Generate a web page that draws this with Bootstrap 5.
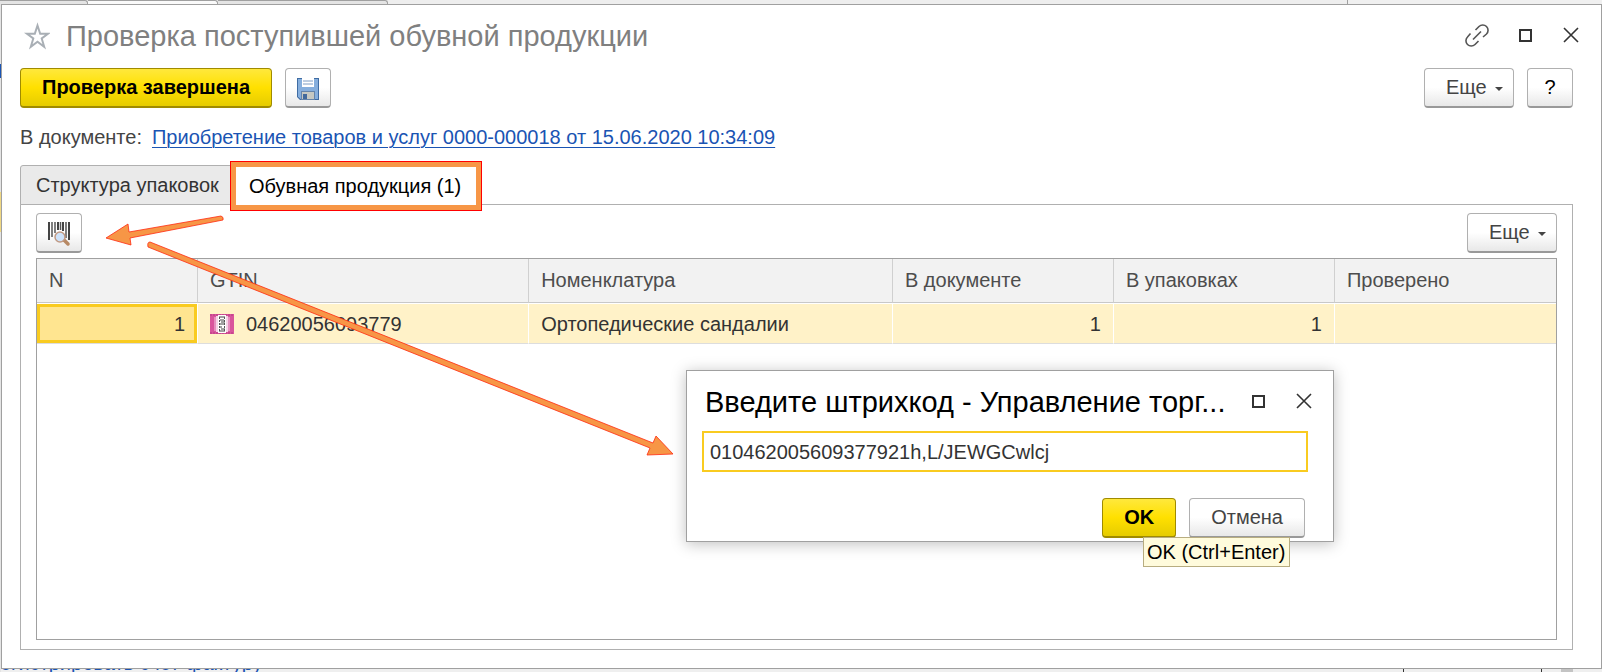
<!DOCTYPE html>
<html lang="ru">
<head>
<meta charset="utf-8">
<meta name="viewport" content="width=device-width, initial-scale=1">
<title>Проверка поступившей обувной продукции</title>
<link rel="stylesheet" href="https://cdn.jsdelivr.net/npm/bootstrap@5.3.0/dist/css/bootstrap.min.css">
<style>
  body { font-family: "Liberation Sans", Arial, sans-serif; font-size: 20px; line-height: 24px; color: #333; background: #efefef; }
  a { color: #1a54b3; }
  .backdrop { background: linear-gradient(#e4e4e4 64px, #1a54b3 64px 78px, #e4e4e4 78px 192px, #f0d883 192px 232px, #e4e4e4 232px) 0 0 / 1px 100% no-repeat; }
  .backdrop-tabs { height: 4px; background: #f0f0f0; }
  .backdrop-tabs span { border-top: 1px solid #a0a0a0; border-right: 1px solid #a0a0a0; border-top-right-radius: 3px; background: #e4e4e4; height: 4px; }
  .backdrop-tabs .tab-a { width: 88px; }
  .backdrop-tabs .tab-b { width: 130px; background: #fafafa; }
  .backdrop-tabs .tab-c { width: 170px; }
  .backdrop-tabs .tab-d { width: 960px; border-top: 0; border-radius: 0; background: #eee; }
  .backdrop-foot { height: 3px; color: #1a54b3; }
  .backdrop-foot .foot-link { line-height: 24px; margin-top: -18px; }
  .backdrop-foot .foot-bar { width: 139px; border-left: 1px solid #333; border-right: 1px solid #333; }
  .backdrop-foot .foot-thumb { width: 12px; background: #c4c4c4; margin: 0 29px 0 19px; }
  .app-window { background: #fff; border: 1px solid #a0a0a0; margin-left: 1px; padding: 11px 28px 18px 18px; min-height: 0; }
  .title-bar { height: 40px; margin-bottom: 12px; }
  .title-bar h1, .prompt h2 { font-size: 29px; line-height: 36px; font-weight: 400; margin: 0; }
  .title-bar h1 { color: #808080; }
  .icon-btn { border: 0; background: none; padding: 0; color: #333; line-height: 0; }
  .win-icons { gap: 24px; margin-right: -9px; }
  .btn-flat { height: 40px; padding: 0 21px; border: 1px solid #b0b0b0; border-bottom: 2px solid #999; border-radius: 4px; background: linear-gradient(#fff 50%, #e8e8e8); font-size: 20px; line-height: 37px; color: #444; }
  .btn-square { width: 46px; padding: 0; }
  .btn-more { width: 90px; padding: 0 10px 0 21px; }
  .btn-more::after { content: ""; border-top: 4px solid #444; border-left: 4px solid transparent; border-right: 4px solid transparent; margin: 2px 0 0; }
  .btn-gold { border-color: #a08b00; background: linear-gradient(#ffe83c, #ffe000 50%, #e6cc00); color: #000; font-weight: 700; }
  .command-bar { gap: 13px; }
  .doc-line { margin: 17px 0 16px; gap: 10px; color: #444; }
  .doc-line a { text-decoration-thickness: 1px; text-underline-offset: 3px; }
  .page-tabs { border: 0; margin-bottom: -1px; position: relative; z-index: 1; }
  .page-tabs .nav-link { height: 40px; border: 1px solid #b0b0b0; border-radius: 3px 0 0 0; margin: 0; padding: 0 15px; background: #eaeaea; color: #333; line-height: 38px; }
  .page-tabs .nav-link:first-child { width: 212px; white-space: nowrap; text-align: left; }
  .page-tabs .nav-link.active { height: 38px; margin: 2px 0 0 4px; background: #fff; border: 0; width: 240px; padding: 0 0 0 13px; line-height: 36px; text-align: left; outline: 5px solid #f79646; box-shadow: 0 0 0 6px red; border-radius: 0; }
  .tab-panel { border: 1px solid #b0b0b0; padding: 8px 15px; }
  .grid-frame { border: 1px solid #a0a0a0; margin-top: 5px; margin-bottom: 1px; }
  .goods { table-layout: fixed; width: 100%; border-collapse: separate; border-spacing: 0; }
  .goods th { height: 44px; font-weight: 400; color: #4d4d4d; background: #f2f2f2; padding: 0 12px 2px; border-right: 1px solid #d0d0d0; border-bottom: 1px solid #c8c8c8; }
  .goods td { height: 41px; padding: 0 12px; background: #fff2c8; border-right: 1px solid #fff; border-top: 1px solid #fff; border-bottom: 1px solid #ddd; background-clip: padding-box; }
  .goods th:last-child, .goods td:last-child { border-right: 0; }
  .goods .picked { background: #ffe590; box-shadow: inset 0 0 0 3px #f9cb20; }
  .arrows { position: absolute; left: 0; top: 0; z-index: 2; pointer-events: none; }
  .prompt { position: absolute; left: 686px; top: 370px; width: 648px; height: 172px; z-index: 3; background: #fff; border: 1px solid #a0a0a0; box-shadow: 0 2px 14px rgba(0,0,0,.25); padding: 13px 25px 0 15px; }
  .prompt h2 { color: #000; padding-left: 3px; white-space: nowrap; }
  .prompt .win-icons { margin-right: -7px; }
  .prompt .form-control { height: 41px; border: 2px solid #f9cb20; border-radius: 0; padding: 1px 6px 0; font-size: 20px; color: #333; margin-top: 11px; }
  .prompt-buttons { margin: 26px 3px 0 0; gap: 13px; }
  .key-tip { position: absolute; left: 456px; top: 166px; border: 1px solid #b8ad80; background: #fffbdc; color: #000; line-height: 28px; padding: 0 4px 0 3px; white-space: nowrap; }
</style>
</head>
<body>
<div class="backdrop vh-100 d-flex flex-column overflow-hidden position-relative">
  <div class="backdrop-tabs d-flex flex-shrink-0"><span class="tab-a"></span><span class="tab-b"></span><span class="tab-c"></span><span class="tab-d"></span></div>

  <main class="app-window flex-grow-1 d-flex flex-column">
    <header class="title-bar d-flex align-items-center">
      <button class="icon-btn me-3" aria-label="В избранное"><svg width="30" height="30" viewBox="0 0 30 30" fill="none" stroke="#a9afb5" stroke-width="2"><path d="M17.500 4.500l2.700 8.300h7.800l-6.300 4.700 2.500 8.300-6.700-5-6.700 5 2.500-8.300-6.300-4.700h7.800z"/></svg></button>
      <h1 class="flex-grow-1">Проверка поступившей обувной продукции</h1>
      <div class="win-icons d-flex align-items-center">
        <button class="icon-btn" aria-label="Ссылка"><svg width="26" height="26" viewBox="0 0 26 26" fill="none" stroke="#555" stroke-width="1.600"><path d="M9 16.500l8-8M11.500 7l3.500-3.500a5.300 5.300 0 0 1 7.500 7.500L19 14M6.500 10.500L3.500 14a5.300 5.300 0 0 0 7.500 7.500l3.500-3.500"/></svg></button>
        <button class="icon-btn" aria-label="Развернуть"><svg width="22" height="22" viewBox="0 0 22 22" fill="none" stroke="#333" stroke-width="2"><path d="M6 5h11v11H6z"/></svg></button>
        <button class="icon-btn" aria-label="Закрыть"><svg width="22" height="22" viewBox="0 0 22 22" stroke="#333" stroke-width="1.600"><path d="M4 3l14 14M18 3L4 17"/></svg></button>
      </div>
    </header>

    <div class="command-bar d-flex align-items-start">
      <button class="btn btn-flat btn-gold">Проверка завершена</button>
      <button class="btn btn-flat btn-square" aria-label="Записать"><svg width="22" height="22" viewBox="0 0 22 22"><path d="M0 0h22v22H3l-3-3z" fill="#3f6ca3"/><path d="M1 1h20v20H3.500L1 18.500z" fill="#85aedd"/><path d="M5 0h12v9H5z" fill="#fff"/><path d="M6 3h10M6 6h10" stroke="#7c9cc4"/><path d="M4 13h14v9H4z" fill="#6484aa"/><path d="M5 14h12v7H5z" fill="#c5c8c2"/><path d="M6 16h4v5H6z" fill="#41699c"/></svg></button>
      <button class="btn btn-flat btn-more dropdown-toggle d-flex align-items-center justify-content-between ms-auto">Еще</button>
      <button class="btn btn-flat btn-square text-black">?</button>
    </div>

    <div class="doc-line d-flex"><span>В документе:</span><a href="#">Приобретение товаров и услуг 0000-000018 от 15.06.2020 10:34:09</a></div>

    <div class="nav nav-tabs page-tabs" role="tablist">
      <button class="nav-link" role="tab">Структура упаковок</button>
      <button class="nav-link active" role="tab">Обувная продукция (1)</button>
    </div>
    <section class="tab-panel flex-grow-1 d-flex flex-column">
      <div class="d-flex justify-content-between">
        <button class="btn btn-flat btn-square" aria-label="Поиск по штрихкоду"><svg width="24" height="26" viewBox="0 0 24 26"><path d="M2 1v18M11 1v8M16 1v9M22 1v18" stroke="#444" stroke-width="2"/><path d="M5 1v15M8 1v11M13.500 1v8M19 1v16" stroke="#555" stroke-width="1.500"/><path d="M17 19l4 4" stroke="#b78964" stroke-width="3.500" stroke-linecap="round"/><circle cx="13" cy="16" r="5" fill="#cfe3fa" stroke="#c09a84" stroke-width="1.500"/></svg></button>
        <button class="btn btn-flat btn-more dropdown-toggle d-flex align-items-center justify-content-between">Еще</button>
      </div>
      <div class="grid-frame flex-grow-1">
        <table class="goods">
          <colgroup><col style="width:10.600%"><col style="width:21.800%"><col style="width:23.950%"><col style="width:14.550%"><col style="width:14.550%"><col></colgroup>
          <thead><tr><th scope="col">N</th><th scope="col">GTIN</th><th scope="col">Номенклатура</th><th scope="col">В документе</th><th scope="col">В упаковках</th><th scope="col">Проверено</th></tr></thead>
          <tbody><tr>
            <td class="picked text-end">1</td>
            <td><div class="d-flex align-items-center gap-2"><svg class="me-1" width="24" height="20" viewBox="0 0 24 20"><path d="M0 0h24v20H0z" fill="#d9559c"/><path d="M0 1h24M0 19h24" stroke="#b53a80" stroke-dasharray="2 1"/><path d="M4 3h16v14H4z" fill="#e68fbe"/><path d="M6 2h12v16H6z" fill="#f6d3e6"/><path d="M8 1h8v18H8z" fill="#fff"/><path d="M9 3h6M10 6h4M11 8h4M9 10h6M9 13h3M11 15h4M9 17h6" stroke="#444"/><path d="M9.500 3v14M14.500 3v14" stroke="#555" stroke-dasharray="2 1"/></svg>04620056093779</div></td>
            <td>Ортопедические сандалии</td><td class="text-end">1</td><td class="text-end">1</td><td></td>
          </tr></tbody>
        </table>
      </div>
    </section>
  </main>

  <footer class="backdrop-foot d-flex flex-shrink-0 overflow-hidden"><span class="foot-link me-auto">егистрировать счет-фактуру</span><span class="foot-bar"></span><span class="foot-thumb"></span></footer>

  <svg class="arrows" width="690" height="470" viewBox="0 0 690 470" fill="#f79646" stroke="#ff2a10" stroke-width=".8" stroke-linejoin="round">
    <path d="M106 238L128 224L129 232L221 216Q224 217 223 220L130 238L131 245Z"/>
    <path d="M150 242L653 443L656 436L673 454L647 455L650 448L148 247Q147 242 150 242Z"/>
  </svg>

  <section class="prompt" role="dialog" aria-labelledby="prompt-title">
    <div class="d-flex align-items-center">
      <h2 id="prompt-title" class="flex-grow-1">Введите штрихкод - Управление торг...</h2>
      <div class="win-icons d-flex align-items-center">
        <button class="icon-btn" aria-label="Развернуть"><svg width="22" height="22" viewBox="0 0 22 22" fill="none" stroke="#333" stroke-width="2"><path d="M6 5h11v11H6z"/></svg></button>
        <button class="icon-btn" aria-label="Закрыть"><svg width="22" height="22" viewBox="0 0 22 22" stroke="#333" stroke-width="1.600"><path d="M4 3l14 14M18 3L4 17"/></svg></button>
      </div>
    </div>
    <input class="form-control" type="text" aria-label="Штрихкод" value="010462005609377921h,L/JEWGCwlcj">
    <div class="prompt-buttons d-flex justify-content-end">
      <button class="btn btn-flat btn-gold">OK</button>
      <button class="btn btn-flat">Отмена</button>
    </div>
    <div class="key-tip" role="tooltip">OK (Ctrl+Enter)</div>
  </section>
</div>
<script src="https://cdn.jsdelivr.net/npm/bootstrap@5.3.0/dist/js/bootstrap.bundle.min.js"></script>
</body>
</html>
